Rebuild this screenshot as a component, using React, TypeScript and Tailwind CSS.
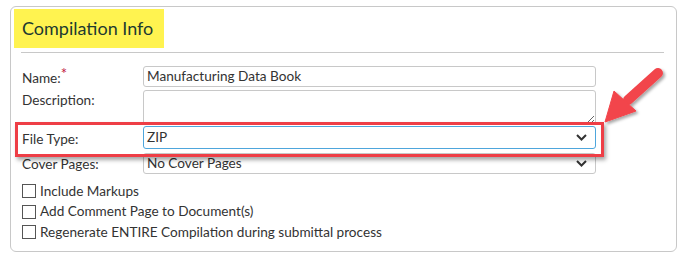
import React from 'react';

function Chevron() {
  return (
    <svg width="11" height="7" viewBox="0 0 11 7" className="mr-[5px]">
      <path d="M1 1 L5.5 5.5 L10 1" fill="none" stroke="#333" strokeWidth="2" />
    </svg>
  );
}

function CheckRow({ label }: { label: string }) {
  return (
    <div className="flex h-[20.5px] items-center gap-[4px]">
      <div className="h-[14px] w-[14px] border border-[#555] bg-white" />
      <span>{label}</span>
    </div>
  );
}

export default function App() {
  return (
    <div className="relative h-[258px] w-[682px] bg-white font-['Lato','Liberation_Sans',sans-serif] text-[13.6px] text-[#333]">
      {/* Panel */}
      <div className="ml-[10px] pt-[6px]">
        <div className="h-[246px] w-[667px] rounded-[6px] border border-[#c8c8c8]">
          {/* Header */}
          <div className="ml-[3px] mt-[2px] flex h-[39px] w-[150px] items-center whitespace-nowrap bg-[#fff350] pl-[8px] text-[18px] text-[#1d3a30]">
            Compilation Info
          </div>
          <div className="ml-[10px] mt-[4px] h-px w-[643px] bg-[#c8c8c8]" />

          {/* Form */}
          <div className="mt-[13px] flex flex-col pl-[11px]">
            <div className="flex">
              <div className="w-[121px] pt-[2px] leading-[18px]">
                Name:<span className="relative -top-[4px] text-[15px] text-[#c0143c]">*</span>
              </div>
              <div className="flex h-[21px] w-[453px] items-center rounded-[3px] border border-[#c8c8c8] px-[3px]">
                Manufacturing Data Book
              </div>
            </div>
            <div className="mt-[3px] flex">
              <div className="w-[121px] pt-[1px] leading-[18px]">Description:</div>
              <textarea
                className="h-[35px] w-[453px] resize-y rounded-[3px] border border-[#c8c8c8] outline-none"
                readOnly
              />
            </div>
            <div className="mt-[1px] flex items-center">
              <div className="w-[121px] pt-[3px]">File Type:</div>
              <div className="flex h-[23px] w-[453px] items-center justify-between rounded-[3px] border border-[#4ea6dc] px-[3px]">
                <span>ZIP</span>
                <Chevron />
              </div>
            </div>
            <div className="mt-[2px] flex items-center">
              <div className="w-[121px] pt-[3px]">Cover Pages:</div>
              <div className="flex h-[21px] w-[453px] items-center justify-between rounded-[3px] border border-[#c8c8c8] px-[3px]">
                <span>No Cover Pages</span>
                <Chevron />
              </div>
            </div>
            <div className="mt-[6px] flex flex-col">
              <CheckRow label="Include Markups" />
              <CheckRow label="Add Comment Page to Document(s)" />
              <CheckRow label="Regenerate ENTIRE Compilation during submittal process" />
            </div>
          </div>
        </div>
      </div>

      {/* Annotation: highlight box */}
      <div className="pointer-events-none absolute left-[15px] top-[122px] h-[35px] w-[589px] border-[3px] border-[#ee3e46] shadow-[2px_3px_4px_rgba(0,0,0,0.35)]" />

      {/* Annotation: arrow */}
      <svg className="pointer-events-none absolute left-0 top-0" width="682" height="258">
        <defs>
          <filter id="sh" x="-20%" y="-20%" width="160%" height="160%">
            <feDropShadow dx="2" dy="2" stdDeviation="1.8" floodColor="#000" floodOpacity="0.35" />
          </filter>
        </defs>
        <g filter="url(#sh)" fill="#f2454b" stroke="#f2454b">
          <line x1="658" y1="73" x2="628" y2="100" strokeWidth="10" strokeLinecap="round" />
          <polygon points="605,122 614,91 636,111" strokeWidth="1" strokeLinejoin="round" />
        </g>
      </svg>
    </div>
  );
}
